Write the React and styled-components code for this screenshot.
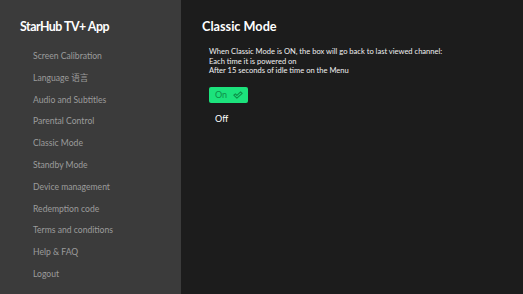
import styled, { createGlobalStyle } from 'styled-components';

const GlobalStyle = createGlobalStyle`
    html, body {
        margin: 0;
        padding: 0;
        background: #1c1c1c;
    }
    body {
        font-family: 'Lato', 'Noto Sans CJK SC', sans-serif;
    }
`;

const Tela = styled.div`
    display: flex;
    width: 523px;
    height: 294px;
    overflow: hidden;
`;

const Lateral = styled.aside`
    width: 181px;
    flex-shrink: 0;
    background: #3b3b3b;
    padding: 18px 0 0 20px;
    box-sizing: border-box;
`;

const TituloApp = styled.h1`
    margin: 0 0 11px;
    color: #ffffff;
    font-size: 12.4px;
    font-weight: 700;
    letter-spacing: -0.5px;
    line-height: 17px;
`;

const Menu = styled.ul`
    list-style: none;
    margin: 0;
    padding: 0 0 0 13px;
    display: flex;
    flex-direction: column;
`;

const ItemMenu = styled.li`
    color: #9c9c9c;
    font-size: 8.6px;
    line-height: 21.8px;
`;

const Conteudo = styled.main`
    flex: 1;
    background: #1c1c1c;
    padding: 18px 0 0 21px;
    box-sizing: border-box;
`;

const Titulo = styled.h2`
    margin: 0 0 12px;
    color: #ffffff;
    font-size: 12.7px;
    font-weight: 700;
    line-height: 17px;
`;

const Descricao = styled.p`
    margin: 0 0 0 7px;
    color: #f0f0f0;
    font-size: 7.55px;
    line-height: 9.6px;
`;

const Opcoes = styled.div`
    display: flex;
    flex-direction: column;
    align-items: flex-start;
    gap: 8px;
    margin: 11px 0 0 7px;
`;

const Opcao = styled.div`
    display: flex;
    align-items: center;
    gap: 6px;
    height: 16px;
    padding: 0 5px 0 6px;
    border-radius: 2px;
    font-size: 9px;
    background: ${({ $ativo }) => ($ativo ? '#1ce27c' : 'transparent')};
    color: ${({ $ativo }) => ($ativo ? '#0e8f48' : '#ffffff')};
`;

const Check = () => (
    <svg width="10" height="8" viewBox="0 0 10 8" fill="none">
        <path
            d="M0.8 4.2 L2.4 2.8 L3.9 4.4 L7.6 0.8 L9.2 2.3 L3.9 7.2 Z"
            stroke="#0e8f48"
            strokeWidth="1.1"
            strokeLinejoin="round"
        />
    </svg>
);

const itens = [
    'Screen Calibration',
    'Language 语言',
    'Audio and Subtitles',
    'Parental Control',
    'Classic Mode',
    'Standby Mode',
    'Device management',
    'Redemption code',
    'Terms and conditions',
    'Help & FAQ',
    'Logout',
];

const App = () => {
    return (
        <>
            <GlobalStyle />
            <Tela>
                <Lateral>
                    <TituloApp>StarHub TV+ App</TituloApp>
                    <Menu>
                        {itens.map((item) => (
                            <ItemMenu key={item}>{item}</ItemMenu>
                        ))}
                    </Menu>
                </Lateral>
                <Conteudo>
                    <Titulo>Classic Mode</Titulo>
                    <Descricao>
                        When Classic Mode is ON, the box will go back to last viewed channel:
                        <br />
                        Each time it is powered on
                        <br />
                        After 15 seconds of idle time on the Menu
                    </Descricao>
                    <Opcoes>
                        <Opcao $ativo>
                            On <Check />
                        </Opcao>
                        <Opcao>Off</Opcao>
                    </Opcoes>
                </Conteudo>
            </Tela>
        </>
    );
};

export default App;
